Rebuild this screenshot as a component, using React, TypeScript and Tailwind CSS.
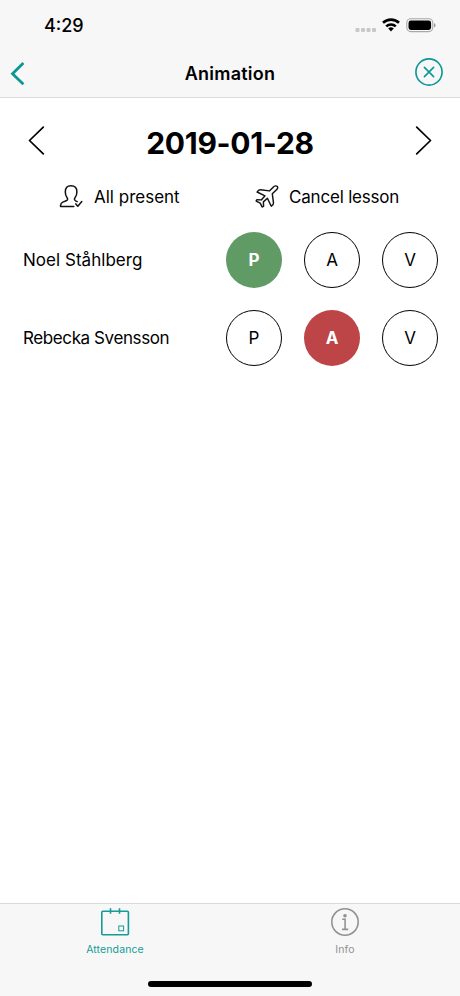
type Mark = "P" | "A" | "V";

const students: { name: string; mark: Mark; spacing: string }[] = [
  { name: "Noel Ståhlberg", mark: "P", spacing: "tracking-[0.03px]" },
  { name: "Rebecka Svensson", mark: "A", spacing: "tracking-[-0.4px]" },
];

const marks: Mark[] = ["P", "A", "V"];

const selectedStyle: Record<Mark, string> = {
  P: "bg-[#609b66] text-white font-bold",
  A: "bg-[#bd4548] text-white font-bold",
  V: "bg-[#609b66] text-white font-bold",
};

function StatusIcons() {
  return (
    <svg width="84" height="18" viewBox="354 16 84 18" className="block">
      <g fill="#c8c8c8">
        <rect x="355.5" y="28" width="4" height="4" rx="1" />
        <rect x="361" y="28" width="4" height="4" rx="1" />
        <rect x="366.5" y="28" width="4" height="4" rx="1" />
        <rect x="372" y="28" width="4" height="4" rx="1" />
      </g>
      <g fill="none" stroke="#000" strokeWidth="2.6">
        <path d="M383 22.8a11.6 11.6 0 0 1 16 0" />
        <path d="M386.2 26.4a7 7 0 0 1 9.6 0" />
      </g>
      <path d="M388.2 28.6a4 4 0 0 1 5.6 0L391 31.6z" />
      <rect x="406.8" y="18.8" width="26" height="12.8" rx="4" fill="none" stroke="#a8a8a8" strokeWidth="1.1" />
      <rect x="408.5" y="20.5" width="22.6" height="9.4" rx="2.4" />
      <path d="M434 23.2c2 .7 2 3.5 0 4.2z" fill="#999" />
    </svg>
  );
}

function UserCheck() {
  return (
    <svg width="24" height="24" viewBox="59 184 24 24" fill="none" stroke="#111" strokeWidth="1.5" strokeLinecap="round" strokeLinejoin="round">
      <path d="M73.8 206.5H61c-.4 0-.6-.3-.5-.7.2-2 .8-3.1 2.3-3.7l3.4-1.3c1.5-.6 1.8-2 .9-3.1-1.3-1.6-1.8-3.1-1.8-5.8 0-4 2.2-6.1 5.7-6.1s5.9 2.1 5.9 6.1c0 2.7-.6 4.2-1.9 5.8-.9 1.1-.7 2.4.6 3.1l1.6.8" />
      <path d="M75.8 203.9l2 2.4 4-4.8" />
    </svg>
  );
}

function Plane() {
  return (
    <svg width="24" height="24" viewBox="255 184 24 24" fill="none" stroke="#111" strokeWidth="1.45" strokeLinejoin="round" strokeLinecap="round">
      <path d="M277.3 186.5c-1-1-2.7-.8-3.9.4l-4 4-9-1.2c-1.2-.1-2.6 1-3.3 2.3l7.9 3.8-3.7 4.1-4.2-.3c-.7.4-1 .9-.9 1.5l4 2 1.9 3.8c.6.1 1.1-.2 1.5-.8l-.2-4.2 4-3.7 3.9 8c1.2-.8 2.3-2.1 2.2-3.3l-1.2-9.1 4.2-4.1c1.2-1.2 1.6-2.4.8-3.2z" />
    </svg>
  );
}

export default function App() {
  return (
    <div className="flex h-[996px] w-[460px] flex-col overflow-hidden bg-white font-['Inter','Liberation_Sans',sans-serif] text-black">
      <header className="h-[98px] shrink-0 border-b border-[#dcdcdc] bg-[#f7f7f7]">
        <div className="flex h-[49px] items-start justify-between pt-4 pr-[22px] pl-11">
          <span className="text-[18px] leading-5 font-medium">4:29</span>
          <StatusIcons />
        </div>
        <div className="grid h-[46px] grid-cols-[1fr_auto_1fr] items-center">
          <button aria-label="Back" className="h-7 w-7 pl-[9px]">
            <svg width="18" height="28" viewBox="9 58 18 28" fill="none" stroke="#0b9794" strokeWidth="2.8">
              <path d="M23.4 62.9L12.5 73.7l10.9 10.5" strokeLinecap="butt" />
            </svg>
          </button>
          <h1 className="pt-[3px] text-[18px] leading-6 font-semibold tracking-[0.22px]">Animation</h1>
          <button aria-label="Close" className="justify-self-end pr-4">
            <svg width="30" height="30" viewBox="0 0 30 30" fill="none" stroke="#0b9794" strokeWidth="1.6" strokeLinecap="round">
              <circle cx="15" cy="15" r="13.1" />
              <path d="M10.4 10.4l9.2 9.2M19.6 10.4l-9.2 9.2" />
            </svg>
          </button>
        </div>
      </header>

      <main className="flex-1">
        <div className="flex h-[85px] items-center justify-between px-[27px]">
          <svg width="18" height="30" viewBox="0 0 18 30" fill="none" stroke="#000" strokeWidth="1.7" strokeLinecap="round" strokeLinejoin="round">
            <path d="M16.3 1.1L2.5 14.5l13.8 13.3" />
          </svg>
          <h2 className="pt-1 text-[30px] leading-9 font-bold tracking-[-0.3px]">2019-01-28</h2>
          <svg width="18" height="30" viewBox="0 0 18 30" fill="none" stroke="#000" strokeWidth="1.7" strokeLinecap="round" strokeLinejoin="round">
            <path d="M1.7 1.1L15.5 14.5 1.7 27.8" />
          </svg>
        </div>
        <div className="flex h-[26px] items-center pl-[59px] text-[17px] leading-6">
          <button className="flex w-[196px] items-center gap-[11px]">
            <UserCheck />
            <span className="pt-[2px]">All present</span>
          </button>
          <button className="flex items-center gap-[10px]">
            <Plane />
            <span className="pt-[2px] tracking-[-0.2px]">Cancel lesson</span>
          </button>
        </div>
        <ul className="flex flex-col gap-[22px] pt-[23px] pr-[22px] pl-[23px] text-[17px]">
          {students.map((student) => (
            <li key={student.name} className="flex items-center justify-between">
              <span className={`pt-[2px] ${student.spacing}`}>{student.name}</span>
              <div className="flex gap-[22px]">
                {marks.map((mark) => (
                  <button
                    key={mark}
                    className={`h-[56px] w-[56px] rounded-full pt-px ${
                      student.mark === mark ? selectedStyle[mark] : "border border-black"
                    }`}
                  >
                    {mark}
                  </button>
                ))}
              </div>
            </li>
          ))}
        </ul>
      </main>

      <footer className="flex h-[93px] shrink-0 flex-col items-center justify-between border-t border-[#dadada] bg-[#f7f7f7] pb-[9px]">
        <nav className="grid w-full grid-cols-2 pt-[3px] text-[10.5px] leading-4">
          <button className="flex flex-col items-center gap-[5px] text-[#159c97]">
            <svg width="30" height="30" viewBox="0 0 30 30" fill="none" stroke="currentColor" strokeWidth="1.6">
              <rect x="1.8" y="4.2" width="26.6" height="23.6" rx="1" />
              <path d="M10.5 1.2v5.6M19.5 1.2v5.6" />
              <rect x="18.8" y="19" width="4.8" height="4.8" strokeWidth="1" />
            </svg>
            <span className="tracking-[0.12px]">Attendance</span>
          </button>
          <button className="flex flex-col items-center gap-[5px] text-[#929292]">
            <svg width="30" height="30" viewBox="0 0 30 30" fill="none" stroke="currentColor" strokeWidth="1.6">
              <circle cx="15" cy="15" r="13.2" />
              <path d="M12.2 12.3h2.9v9.8M12 22.4h6.2" />
              <circle cx="15" cy="8.7" r="1.8" fill="currentColor" stroke="none" />
            </svg>
            <span className="tracking-[0.12px]">Info</span>
          </button>
        </nav>
        <div className="h-[6px] w-[164px] rounded-full bg-black" />
      </footer>
    </div>
  );
}
